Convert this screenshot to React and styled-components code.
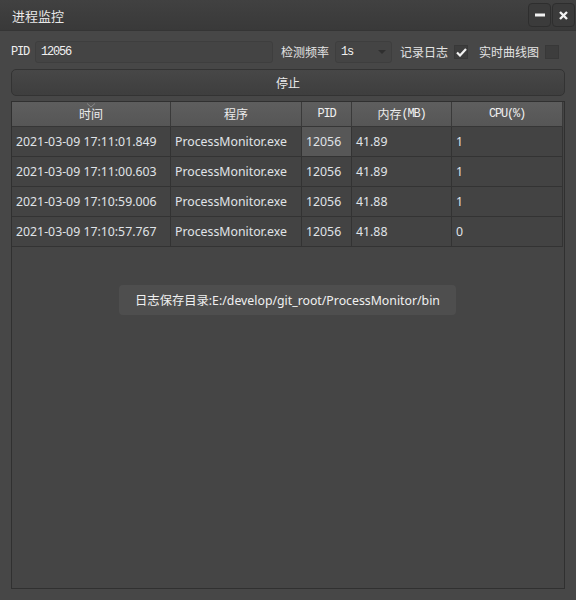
import React from 'react';
import styled, {createGlobalStyle} from 'styled-components';

const GlobalStyle = createGlobalStyle`
  html, body {
    margin: 0;
    padding: 0;
    background: #474747;
  }
`;

const cjk = `"Noto Sans", "Noto Sans CJK SC", sans-serif`;
const mono = `"Liberation Mono", "Noto Sans CJK SC", monospace`;

const Window = styled.div`
  width: 576px;
  height: 600px;
  display: flex;
  flex-direction: column;
  background: #474747;
  color: #e4e4e4;
  font-family: ${cjk};
  overflow: hidden;
`;

const TitleBar = styled.div`
  height: 31px;
  flex: none;
  display: flex;
  align-items: center;
  padding: 0 1px 0 12px;
  background: linear-gradient(#414141, #393939);
  border-bottom: 1px solid #353535;
  box-sizing: border-box;
`;

const Title = styled.div`
  flex: 1;
  font-size: 13px;
  color: #e8e8e8;
`;

const TitleButton = styled.div`
  width: 23px;
  height: 24px;
  margin-left: 1px;
  box-sizing: border-box;
  border: 1px solid #2e2e2e;
  border-radius: 4px;
  background: #3b3b3b;
  display: flex;
  align-items: center;
  justify-content: center;
`;

const Body = styled.div`
  flex: 1;
  display: flex;
  flex-direction: column;
  padding: 10px 11px 11px 11px;
  min-height: 0;
`;

const Controls = styled.div`
  display: flex;
  align-items: center;
  height: 22px;
  margin-bottom: 6px;
`;

// SimSun-like narrow monospace: 12px glyphs on a 6px pitch
const MonoText = styled.span`
  font-family: ${mono};
  font-size: 12px;
  letter-spacing: -1.2px;
  color: #f0f0f0;
`;

const Label = styled.span`
  margin-left: ${(p) => p.$left || 0}px;
  color: #e4e4e4;
  font-size: 12px;
  white-space: nowrap;
`;

const Field = styled.div`
  box-sizing: border-box;
  height: 22px;
  width: ${(p) => p.$width}px;
  flex: none;
  margin-left: ${(p) => p.$left || 0}px;
  border: 1px solid #3e3e3e;
  border-radius: 3px;
  background: #444444;
  display: flex;
  align-items: center;
  padding-left: 5px;
`;

const Arrow = styled.span`
  margin-left: auto;
  margin-right: 5px;
  width: 0;
  height: 0;
  border-left: 4px solid transparent;
  border-right: 4px solid transparent;
  border-top: 4px solid #2f2f2f;
`;

const Check = styled.div`
  box-sizing: border-box;
  flex: none;
  width: 14px;
  height: 14px;
  margin-left: 6px;
  border: 1px solid #383838;
  background: #3d3d3d;
  display: flex;
  align-items: center;
  justify-content: center;
`;

const StopButton = styled.div`
  height: 27px;
  flex: none;
  box-sizing: border-box;
  border: 1px solid #333;
  border-radius: 5px;
  background: linear-gradient(#474747, #3e3e3e);
  display: flex;
  align-items: center;
  justify-content: center;
  font-size: 12px;
  color: #eaeaea;
  margin-bottom: 5px;
`;

const TableFrame = styled.div`
  position: relative;
  flex: 1;
  border: 1px solid #303030;
  background: #454545;
`;

const Grid = styled.div`
  display: grid;
  grid-template-columns: 159px 131px 50px 100px 111px;
`;

const HeadCell = styled.div`
  position: relative;
  height: 25px;
  box-sizing: border-box;
  background: linear-gradient(#5e5e5e, #565656);
  border-right: 1px solid #3a3a3a;
  border-bottom: 1px solid #363636;
  display: flex;
  align-items: center;
  justify-content: center;
  font-size: 12px;
  color: #ececec;
`;

const SortMark = styled.span`
  position: absolute;
  top: 1px;
  left: 50%;
  transform: translateX(-50%);
  width: 9px;
  height: 5px;
  line-height: 0;
`;

const Cell = styled.div`
  height: 30px;
  box-sizing: border-box;
  padding-left: 4px;
  border-right: 1px solid #333;
  border-bottom: 1px solid #333;
  background: ${(p) => (p.$selected ? '#575757' : '#434343')};
  display: flex;
  align-items: center;
  font-size: 12.3px;
  color: #e0e4e8;
  white-space: nowrap;
`;

const Toast = styled.div`
  position: absolute;
  left: 107px;
  top: 183px;
  width: 337px;
  height: 30px;
  border-radius: 4px;
  background: #4e4e4e;
  display: flex;
  align-items: center;
  justify-content: center;
  font-size: 12.3px;
  color: #f0f0f0;
  white-space: nowrap;
`;

const rows = [
  ['2021-03-09 17:11:01.849', 'ProcessMonitor.exe', '12056', '41.89', '1'],
  ['2021-03-09 17:11:00.603', 'ProcessMonitor.exe', '12056', '41.89', '1'],
  ['2021-03-09 17:10:59.006', 'ProcessMonitor.exe', '12056', '41.88', '1'],
  ['2021-03-09 17:10:57.767', 'ProcessMonitor.exe', '12056', '41.88', '0'],
];

const Tick = () => (
  <svg width="11" height="9" viewBox="0 0 11 9">
    <path d="M1 4.5 L4 7.5 L10 1" fill="none" stroke="#f2f2f2" strokeWidth="2.2" />
  </svg>
);

export default function App() {
  return (
    <Window>
      <GlobalStyle />
      <TitleBar>
        <Title>进程监控</Title>
        <TitleButton>
          <svg width="10" height="4" viewBox="0 0 10 4">
            <rect x="0" y="0.5" width="10" height="3" fill="#f2f2f2" />
          </svg>
        </TitleButton>
        <TitleButton>
          <svg width="9" height="9" viewBox="0 0 9 9">
            <path d="M1 1 L8 8 M8 1 L1 8" stroke="#f2f2f2" strokeWidth="2.4" />
          </svg>
        </TitleButton>
      </TitleBar>
      <Body>
        <Controls>
          <MonoText>PID</MonoText>
          <Field $width={238} $left={6}>
            <MonoText>12056</MonoText>
          </Field>
          <Label $left={8}>检测频率</Label>
          <Field $width={57} $left={6}>
            <MonoText>1s</MonoText>
            <Arrow />
          </Field>
          <Label $left={8}>记录日志</Label>
          <Check>
            <Tick />
          </Check>
          <Label $left={11}>实时曲线图</Label>
          <Check />
        </Controls>
        <StopButton>停止</StopButton>
        <TableFrame>
          <Grid>
            <HeadCell>
              <SortMark>
                <svg width="9" height="5" viewBox="0 0 9 5">
                  <path d="M0.5 0.5 L4.5 4 L8.5 0.5" fill="none" stroke="#8a8a8a" strokeWidth="1" />
                </svg>
              </SortMark>
              时间
            </HeadCell>
            <HeadCell>程序</HeadCell>
            <HeadCell><MonoText>PID</MonoText></HeadCell>
            <HeadCell>内存<MonoText>(MB)</MonoText></HeadCell>
            <HeadCell><MonoText>CPU(%)</MonoText></HeadCell>
            {rows.map((row, r) =>
              row.map((value, c) => (
                <Cell key={`${r}-${c}`} $selected={r === 0 && c === 2}>
                  {value}
                </Cell>
              ))
            )}
          </Grid>
          <Toast>日志保存目录:E:/develop/git_root/ProcessMonitor/bin</Toast>
        </TableFrame>
      </Body>
    </Window>
  );
}
